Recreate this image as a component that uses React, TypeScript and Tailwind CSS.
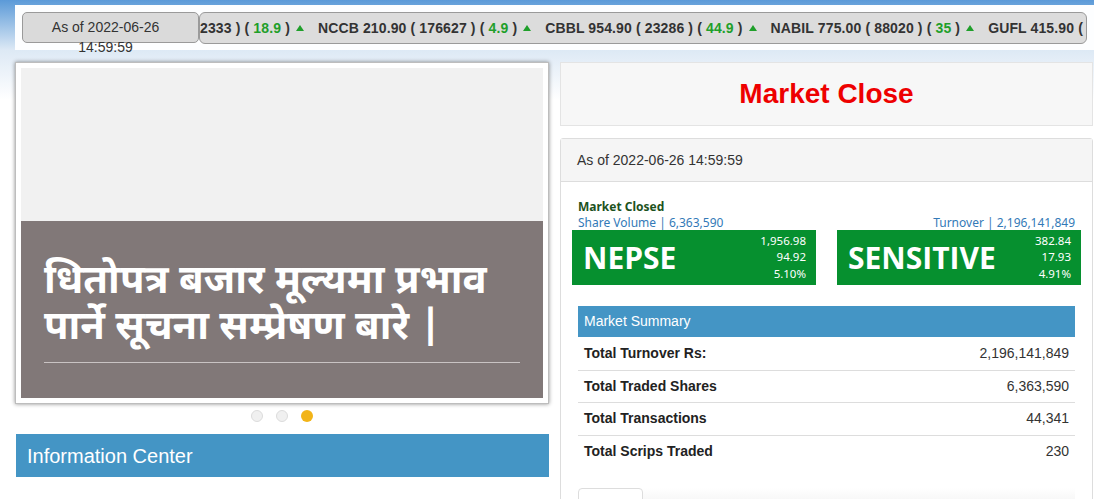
import React from "react";

const ticker = [
  { head: "", price: "2333 )", change: "18.9" },
  { head: "NCCB 210.90 ( 176627 )", change: "4.9" },
  { head: "CBBL 954.90 ( 23286 )", change: "44.9" },
  { head: "NABIL 775.00 ( 88020 )", change: "35" },
  { head: "GUFL 415.90 ( 12004 )", change: "10.9" },
];

const summary = [
  ["Total Turnover Rs:", "2,196,141,849"],
  ["Total Traded Shares", "6,363,590"],
  ["Total Transactions", "44,341"],
  ["Total Scrips Traded", "230"],
];

function Up() {
  return (
    <svg width="8" height="6" viewBox="0 0 8 6" className="inline-block ml-[6px] mb-[2px]">
      <path d="M0 6 L4 0 L8 6 Z" fill="#1f9f2a" />
    </svg>
  );
}

function IndexBox({ name, values }: { name: string; values: string[] }) {
  return (
    <div className="flex h-[55px] w-[244px] items-center justify-between bg-[#06902f] pl-[11px] pr-[10px] text-white">
      <span className="font-['Open_Sans',sans-serif] text-[30px] font-bold leading-none">{name}</span>
      <div className="flex flex-col items-end text-[11.5px] leading-[16.5px] font-['Noto_Sans',sans-serif]">
        {values.map((v) => (
          <span key={v}>{v}</span>
        ))}
      </div>
    </div>
  );
}

export default function App() {
  return (
    <div className="h-[499px] w-[1094px] overflow-hidden bg-[linear-gradient(to_bottom,#5b9ad8_0px,#dde9f5_50px,#ffffff_100px)] font-['Liberation_Sans',Arial,sans-serif] text-[#333]">
      {/* ticker bar */}
      <div className="ml-[15px] mt-[5px] flex h-[45px] bg-[#fdfeff] pl-[7px] pt-[7px]">
        <div className="h-[31px] w-[177px] shrink-0 rounded-[5px] border border-[#9a9a9a] bg-[#dadada] pt-[4px] pr-[10px] text-center text-[14px] leading-[20px] text-[#333]">
          As of 2022-06-26
          <br />
          14:59:59
        </div>
        <div className="flex h-[32px] w-[888px] shrink-0 items-center overflow-hidden whitespace-nowrap rounded-[6px] border border-[#9a9a9a] bg-[#dcdcdc] text-[14px] font-bold tracking-[0.13px] text-[#333]">
          {ticker.map((t, i) => (
            <span key={i} className={i === 0 ? "" : "ml-[14px]"}>
              {t.head}
              {t.price}
              {" ( "}
              <span className="text-[#1f9f2a]">{t.change}</span>
              {" )"}
              <Up />
            </span>
          ))}
        </div>
      </div>

      <div className="flex gap-[11px] pl-[15px] pt-[12px]">
        {/* left column */}
        <div className="w-[534px] shrink-0">
          <div className="h-[342px] border border-[#bdbdbd] bg-white p-[5px] shadow-[0_0_4px_rgba(0,0,0,0.45)]">
            <div className="h-[153px] bg-[#f1f1f1]" />
            <div className="h-[177px] bg-[#817878] px-[23px] pt-[39px]">
              <div className="font-['Noto_Sans_Devanagari','Noto_Sans','Lohit_Devanagari',sans-serif] text-[40px] font-bold leading-[46px] text-white">
                धितोपत्र बजार मूल्यमा प्रभाव
                <br />
                पार्ने सूचना सम्प्रेषण बारे |
              </div>
              <div className="mt-[10px] h-px bg-[#c9c3c3]" />
            </div>
          </div>
          <div className="mt-[6px] flex justify-center gap-[13px]">
            <span className="h-[12px] w-[12px] rounded-full border border-[#dcdcdc] bg-[#f0f0f0]" />
            <span className="h-[12px] w-[12px] rounded-full border border-[#dcdcdc] bg-[#f0f0f0]" />
            <span className="h-[12px] w-[12px] rounded-full bg-[#f2b418]" />
          </div>
          <div className="mt-[12px] ml-px flex h-[43px] items-center bg-[#4495c5] pl-[11px] text-[20px] text-white">
            Information Center
          </div>
        </div>

        {/* right column */}
        <div className="w-[533px] shrink-0">
          <div className="flex h-[64px] items-center justify-center border border-[#e4e4e4] bg-[#f7f7f7] text-[28px] font-bold text-[#ee0000]">
            Market Close
          </div>
          <div className="mt-[12px] h-[400px] rounded-[3px] border border-[#dddddd] bg-white">
            <div className="flex h-[43px] items-center border-b border-[#dddddd] bg-[#f5f5f5] pl-[16px] text-[14px] text-[#333]">
              As of 2022-06-26 14:59:59
            </div>
            <div className="px-[11px] pt-[17px]">
              <div className="px-[6px] font-['Noto_Sans',sans-serif] text-[12px] leading-[16px]">
                <div className="font-bold text-[#1d521d]">Market Closed</div>
                <div className="flex justify-between text-[#337ab7]">
                  <span>Share Volume | 6,363,590</span>
                  <span>Turnover | 2,196,141,849</span>
                </div>
              </div>
              <div className="mt-[-1px] flex justify-between">
                <IndexBox name="NEPSE" values={["1,956.98", "94.92", "5.10%"]} />
                <IndexBox name="SENSITIVE" values={["382.84", "17.93", "4.91%"]} />
              </div>

              <div className="mx-[6px] mt-[21px]">
                <div className="flex h-[31px] items-center bg-[#4495c5] pl-[6px] text-[14px] text-white">
                  Market Summary
                </div>
                {summary.map(([k, v], i) => (
                  <div
                    key={k}
                    className={`flex h-[32.5px] items-center justify-between px-[6px] text-[14px] ${i > 0 ? "border-t border-[#dddddd]" : ""}`}
                  >
                    <span className="font-bold text-[#222]">{k}</span>
                    <span className="text-[#333]">{v}</span>
                  </div>
                ))}
                <div className="mt-[21px] flex">
                  <div className="h-[20px] w-[65px] rounded-t-[4px] border border-[#dddddd] bg-white" />
                  <div className="h-[20px] flex-1 bg-[linear-gradient(to_bottom,#ffffff,#f2f2f2)]" />
                </div>
              </div>
            </div>
          </div>
        </div>
      </div>
    </div>
  );
}
